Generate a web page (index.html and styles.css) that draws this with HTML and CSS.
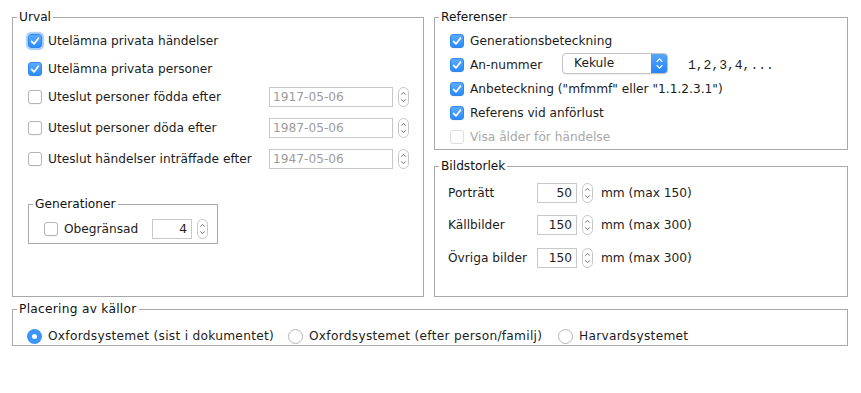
FILE: index.html
```html
<!DOCTYPE html>
<html lang="sv">
<head>
  <meta charset="UTF-8" />
  <title>Inställningar</title>
  <link rel="stylesheet" href="styles.css">
</head>
<body>

  <div class="dialog">
    <div class="top-row">

      <fieldset class="group urval">
        <legend>Urval</legend>
        <div class="group-body">

          <div class="row row-1">
            <span class="cb checked focus"><svg viewBox="0 0 14 14"><path d="M3.6 7.4 L6 9.9 L10.4 4.2"/></svg></span>
            <span>Utelämna privata händelser</span>
          </div>
          <div class="row row-2">
            <span class="cb checked"><svg viewBox="0 0 14 14"><path d="M3.6 7.4 L6 9.9 L10.4 4.2"/></svg></span>
            <span>Utelämna privata personer</span>
          </div>
          <div class="row row-3">
            <span class="cb"></span>
            <span class="date-label">Uteslut personer födda efter</span>
            <span class="field date disabled">1917-05-06</span>
            <span class="spin"><svg viewBox="0 0 11 20"><rect x="0.5" y="0.5" width="10" height="19" rx="5"/><path d="M3.3 7.6 L5.5 5.4 L7.7 7.6 M3.3 12.4 L5.5 14.6 L7.7 12.4"/></svg></span>
          </div>
          <div class="row row-4">
            <span class="cb"></span>
            <span class="date-label">Uteslut personer döda efter</span>
            <span class="field date disabled">1987-05-06</span>
            <span class="spin"><svg viewBox="0 0 11 20"><rect x="0.5" y="0.5" width="10" height="19" rx="5"/><path d="M3.3 7.6 L5.5 5.4 L7.7 7.6 M3.3 12.4 L5.5 14.6 L7.7 12.4"/></svg></span>
          </div>
          <div class="row row-4">
            <span class="cb"></span>
            <span class="date-label">Uteslut händelser inträffade efter</span>
            <span class="field date disabled">1947-05-06</span>
            <span class="spin"><svg viewBox="0 0 11 20"><rect x="0.5" y="0.5" width="10" height="19" rx="5"/><path d="M3.3 7.6 L5.5 5.4 L7.7 7.6 M3.3 12.4 L5.5 14.6 L7.7 12.4"/></svg></span>
          </div>

          <fieldset class="group generationer">
            <legend>Generationer</legend>
            <div class="group-body">
              <div class="row gen-row">
                <span class="cb"></span>
                <span class="gen-label">Obegränsad</span>
                <span class="field num">4</span>
                <span class="spin"><svg viewBox="0 0 11 20"><rect x="0.5" y="0.5" width="10" height="19" rx="5"/><path d="M3.3 7.6 L5.5 5.4 L7.7 7.6 M3.3 12.4 L5.5 14.6 L7.7 12.4"/></svg></span>
              </div>
            </div>
          </fieldset>
        </div>
      </fieldset>

      <div class="right-col">
        <fieldset class="group referenser">
          <legend>Referenser</legend>
          <div class="group-body">
            <div class="row ref-row first">
              <span class="cb checked"><svg viewBox="0 0 14 14"><path d="M3.6 7.4 L6 9.9 L10.4 4.2"/></svg></span>
              <span>Generationsbeteckning</span>
            </div>
            <div class="row ref-row">
              <span class="cb checked"><svg viewBox="0 0 14 14"><path d="M3.6 7.4 L6 9.9 L10.4 4.2"/></svg></span>
              <span class="an-label">An-nummer</span>
              <span class="combo">
                <span class="combo-text">Kekule</span>
                <span class="combo-btn"><svg viewBox="0 0 17 21"><path d="M5.6 8.8 L8.5 5.9 L11.4 8.8 M5.6 12.2 L8.5 15.1 L11.4 12.2"/></svg></span>
              </span>
              <span class="mono">1,2,3,4,...</span>
            </div>
            <div class="row ref-row">
              <span class="cb checked"><svg viewBox="0 0 14 14"><path d="M3.6 7.4 L6 9.9 L10.4 4.2"/></svg></span>
              <span>Anbeteckning ("mfmmf" eller "1.1.2.3.1")</span>
            </div>
            <div class="row ref-row">
              <span class="cb checked"><svg viewBox="0 0 14 14"><path d="M3.6 7.4 L6 9.9 L10.4 4.2"/></svg></span>
              <span>Referens vid anförlust</span>
            </div>
            <div class="row ref-row muted">
              <span class="cb disabled"></span>
              <span>Visa ålder för händelse</span>
            </div>
          </div>
        </fieldset>

        <fieldset class="group bildstorlek">
          <legend>Bildstorlek</legend>
          <div class="group-body">
            <div class="row size-row first">
              <span class="size-label">Porträtt</span>
              <span class="field num">50</span>
              <span class="spin"><svg viewBox="0 0 11 20"><rect x="0.5" y="0.5" width="10" height="19" rx="5"/><path d="M3.3 7.6 L5.5 5.4 L7.7 7.6 M3.3 12.4 L5.5 14.6 L7.7 12.4"/></svg></span>
              <span class="unit">mm (max 150)</span>
            </div>
            <div class="row size-row">
              <span class="size-label">Källbilder</span>
              <span class="field num">150</span>
              <span class="spin"><svg viewBox="0 0 11 20"><rect x="0.5" y="0.5" width="10" height="19" rx="5"/><path d="M3.3 7.6 L5.5 5.4 L7.7 7.6 M3.3 12.4 L5.5 14.6 L7.7 12.4"/></svg></span>
              <span class="unit">mm (max 300)</span>
            </div>
            <div class="row size-row last">
              <span class="size-label">Övriga bilder</span>
              <span class="field num">150</span>
              <span class="spin"><svg viewBox="0 0 11 20"><rect x="0.5" y="0.5" width="10" height="19" rx="5"/><path d="M3.3 7.6 L5.5 5.4 L7.7 7.6 M3.3 12.4 L5.5 14.6 L7.7 12.4"/></svg></span>
              <span class="unit">mm (max 300)</span>
            </div>
          </div>
        </fieldset>
      </div>
    </div>

    <fieldset class="group placering">
      <legend>Placering av källor</legend>
      <div class="group-body">
        <div class="row radio-row">
          <span class="option opt-1"><span class="radio selected"></span>Oxfordsystemet (sist i dokumentet)</span>
          <span class="option opt-2"><span class="radio"></span>Oxfordsystemet (efter person/familj)</span>
          <span class="option"><span class="radio"></span>Harvardsystemet</span>
        </div>
      </div>
    </fieldset>
  </div>

</body>
</html>
```

FILE: styles.css
```css
* {
  box-sizing: border-box;
  margin: 0;
  padding: 0;
}

body {
  font-family: 'DejaVu Sans', 'Noto Sans', sans-serif;
  font-size: 12.2px;
  color: #1c1c1c;
  background: #fff;
}

.dialog {
  padding: 9px 0 0 12px;
  width: 848px;
}

.top-row {
  display: flex;
  gap: 10px;
}

/* titled borders */
.group {
  border: 1px solid #a9a9a9;
  min-width: 0;
  padding: 0;
}

.group legend {
  margin-left: 4px;
  padding: 0 2px;
  line-height: 16px;
  color: #111;
}

.urval {
  width: 412px;
}

.urval > .group-body {
  padding-left: 15px;
}

.right-col {
  width: 414px;
  display: flex;
  flex-direction: column;
  gap: 8px;
}

.referenser {
  height: 141px;
}

.referenser .group-body {
  padding-left: 15px;
}

.bildstorlek {
  height: 139px;
}

.bildstorlek .group-body {
  padding-left: 13px;
}

.placering {
  width: 836px;
  margin-top: 4px;
  padding-bottom: 1px;
  letter-spacing: 0.28px;
}

.placering .group-body {
  padding-left: 14px;
}

/* rows */
.row {
  display: flex;
  align-items: center;
  height: 22px;
  white-space: nowrap;
}

.row-1 { margin-top: 5px; }
.row-2 { margin-top: 6px; }
.row-3 { margin-top: 6px; }
.row-4 { margin-top: 9px; }

.row .cb {
  margin-right: 6px;
}

.date-label {
  width: 221px;
}

.generationer {
  width: 190px;
  margin-top: 26px;
  padding-bottom: 3px;
}

.generationer .group-body {
  padding-left: 15px;
}

.gen-row {
  margin-top: 6px;
}

.gen-label {
  width: 88px;
}

.ref-row {
  height: 24px;
}

.ref-row.first {
  margin-top: 4px;
}

.an-label {
  width: 92px;
}

.muted {
  color: #a8a8a8;
}

.size-row {
  margin-top: 10px;
}

.size-row.first {
  margin-top: 8px;
}

.size-row.last {
  margin-top: 11px;
}

.size-label {
  width: 89px;
}

.unit {
  margin-left: 8px;
}

.radio-row {
  height: 16px;
  margin-top: 11px;
}

.option {
  display: flex;
  align-items: center;
}

.opt-1 { width: 261px; }
.opt-2 { width: 270px; }

/* checkbox */
.cb {
  flex: none;
  width: 14px;
  height: 14px;
  border: 1px solid #b4b4b4;
  border-radius: 3px;
  background: #fff;
  box-shadow: 0 0.5px 0.5px rgba(0,0,0,0.08);
  display: flex;
}

.cb svg {
  width: 14px;
  height: 14px;
  margin: -1px;
}

.cb svg path {
  fill: none;
  stroke: #fff;
  stroke-width: 1.7;
  stroke-linecap: round;
  stroke-linejoin: round;
}

.cb.checked {
  border-color: #2f86ee;
  background: linear-gradient(#5cabfd, #2b8bfb);
}

.cb.focus {
  box-shadow: 0 0 1px 2px rgba(96, 160, 242, 0.55);
}

.cb.disabled {
  border-color: #dedede;
  box-shadow: none;
}

/* text fields */
.field {
  flex: none;
  height: 20px;
  border: 1px solid #c8c8c8;
  line-height: 18px;
  padding: 0 3px;
  background: #fff;
}

.field.date {
  width: 124px;
}

.field.disabled {
  color: #9c9c9c;
}

.field.num {
  width: 40px;
  text-align: right;
  padding-right: 4px;
}

.spin {
  flex: none;
  width: 11px;
  height: 20px;
  margin-left: 5px;
}

.spin svg {
  display: block;
  width: 11px;
  height: 20px;
}

.spin rect {
  fill: #fff;
  stroke: #c6c6c6;
}

.spin path {
  fill: none;
  stroke: #6e6e6e;
  stroke-width: 1;
}

/* combo box */
.combo {
  flex: none;
  display: flex;
  width: 106px;
  height: 21px;
  margin-bottom: 3px;
  border: 1px solid #c3c3c3;
  border-radius: 4px;
  background: #fff;
  overflow: hidden;
  box-shadow: 0 0.5px 0.5px rgba(0,0,0,0.1);
}

.combo-text {
  flex: 1;
  padding-left: 11px;
  line-height: 19px;
}

.combo-btn {
  width: 17px;
  margin: -1px -1px -1px 0;
  background: linear-gradient(#58a8fc, #2283f8);
}

.combo-btn svg {
  display: block;
  width: 17px;
  height: 21px;
}

.combo-btn path {
  fill: none;
  stroke: #fff;
  stroke-width: 1.2;
}

.mono {
  margin-left: 20px;
  font-family: 'Liberation Mono', monospace;
  font-size: 13px;
}

/* radio buttons */
.radio {
  flex: none;
  width: 15px;
  height: 15px;
  margin-right: 6px;
  border: 1px solid #b6b6b6;
  border-radius: 50%;
  background: #fff;
}

.radio.selected {
  border: 5px solid #3a96fb;
  background: #fff;
}
```
